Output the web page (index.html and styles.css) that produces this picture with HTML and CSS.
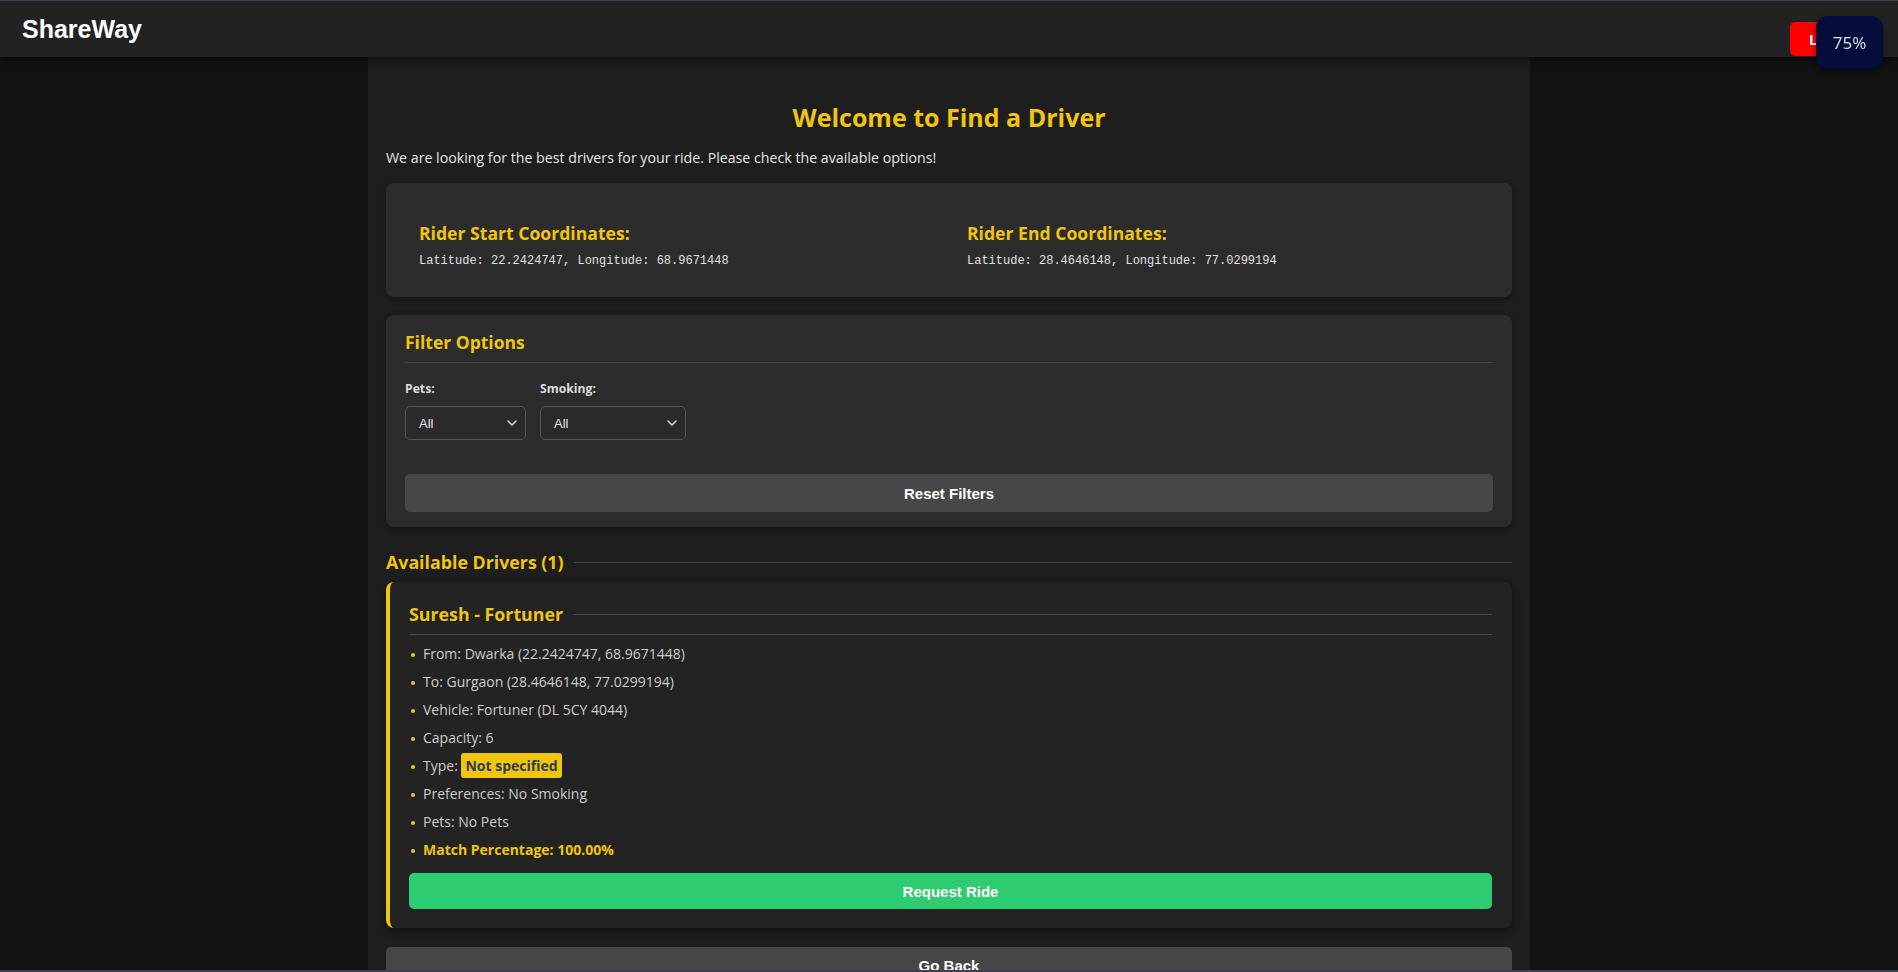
FILE: index.html
```html
<!DOCTYPE html>
<html lang="en">
<head>
<meta charset="utf-8">
<title>ShareWay - Find a Driver</title>
<link rel="stylesheet" href="styles.css">
</head>
<body>
<div class="frame"></div>
<nav class="navbar">
  <div class="brand">ShareWay</div>
  <button class="logout">Logout</button>
</nav>
<div class="zoom-badge">75%</div>
<main class="container">
  <h1 class="page-title">Welcome to Find a Driver</h1>
  <p class="intro">We are looking for the best drivers for your ride. Please check the available options!</p>

  <section class="card coords">
    <div class="coord">
      <h3 class="coord-title">Rider Start Coordinates:</h3>
      <p class="mono">Latitude: 22.2424747, Longitude: 68.9671448</p>
    </div>
    <div class="coord">
      <h3 class="coord-title">Rider End Coordinates:</h3>
      <p class="mono">Latitude: 28.4646148, Longitude: 77.0299194</p>
    </div>
  </section>

  <section class="card filters">
    <h3 class="filter-title">Filter Options</h3>
    <div class="filter-row">
      <div class="filter-group">
        <label class="filter-label">Pets:</label>
        <div class="select select-pets"><span>All</span><svg class="chev" width="10" height="6" viewBox="0 0 10 6"><path d="M1 1l4 4 4-4" fill="none" stroke="#d0d0d0" stroke-width="1.6" stroke-linecap="round" stroke-linejoin="round"/></svg></div>
      </div>
      <div class="filter-group">
        <label class="filter-label">Smoking:</label>
        <div class="select select-smoking"><span>All</span><svg class="chev" width="10" height="6" viewBox="0 0 10 6"><path d="M1 1l4 4 4-4" fill="none" stroke="#d0d0d0" stroke-width="1.6" stroke-linecap="round" stroke-linejoin="round"/></svg></div>
      </div>
    </div>
    <button class="btn btn-grey">Reset Filters</button>
  </section>

  <h2 class="section-title">Available Drivers (1)</h2>

  <article class="driver-card">
    <h3 class="driver-name">Suresh - Fortuner</h3>
    <ul class="details">
      <li>From: Dwarka (22.2424747, 68.9671448)</li>
      <li>To: Gurgaon (28.4646148, 77.0299194)</li>
      <li>Vehicle: Fortuner (DL 5CY 4044)</li>
      <li>Capacity: 6</li>
      <li>Type: <span class="badge">Not specified</span></li>
      <li>Preferences: No Smoking</li>
      <li>Pets: No Pets</li>
      <li class="match">Match Percentage: 100.00%</li>
    </ul>
    <button class="btn btn-green">Request Ride</button>
  </article>

  <button class="btn btn-grey btn-back">Go Back</button>
</main>
</body>
</html>
```

FILE: styles.css
```css
* { box-sizing: border-box; }
html, body { margin: 0; padding: 0; }
body {
  background: #121212;
  color: #e0e0e0;
  font-family: "Open Sans", "Noto Sans", sans-serif;
  height: 972px;
  overflow: hidden;
}
.frame {
  position: fixed;
  inset: 0;
  border-top: 1px solid #3e3e55;
  border-bottom: 2px solid #3e3e55;
  pointer-events: none;
  z-index: 20;
}
.navbar {
  position: relative;
  z-index: 2;
  height: 57px;
  background: #222222;
  display: flex;
  justify-content: space-between;
  align-items: flex-start;
  padding: 0 21px 0 22px;
  box-shadow: 0 3px 8px rgba(0, 0, 0, 0.55);
}
.brand {
  font-family: "Liberation Sans", Arial, sans-serif;
  font-weight: 700;
  font-size: 25px;
  line-height: 28px;
  margin-top: 15px;
  color: #ffffff;
}
.logout {
  margin-top: 22px;
  height: 34px;
  padding: 0 17px 0 19px;
  border: 0;
  border-radius: 5px;
  background: #ff0000;
  color: #ffffff;
  font: 700 15px "Liberation Sans", Arial, sans-serif;
}
.zoom-badge {
  position: absolute;
  top: 16px;
  right: 15px;
  width: 67px;
  height: 53px;
  border-radius: 12px;
  background: #030c3a;
  color: #dfe3f0;
  font: 400 17px "Open Sans", sans-serif;
  display: flex;
  align-items: center;
  justify-content: center;
  z-index: 30;
  box-shadow: 0 2px 6px rgba(0, 0, 0, 0.4);
}
.container {
  width: 1162px;
  margin: 0 auto;
  background: #1e1e1e;
  padding: 20px 18px 0;
  min-height: 915px;
}
.page-title {
  margin: 24px 0 15px;
  font-size: 25px;
  line-height: 32px;
  font-weight: 700;
  text-align: center;
  color: #f1c40f;
}
.intro {
  margin: 0 0 15px;
  font-size: 14.2px;
  line-height: 20px;
  color: #e6e6e6;
}
.card {
  background: #2c2c2c;
  border-radius: 8px;
  box-shadow: 0 2px 6px rgba(0, 0, 0, 0.35);
}
.coords {
  display: grid;
  grid-template-columns: 1fr 1fr;
  column-gap: 36px;
  padding: 38px 33px 28px;
  margin-bottom: 18px;
}
.coord-title {
  margin: 0 0 8px;
  font-size: 17.6px;
  line-height: 24px;
  font-weight: 700;
  color: #f1c40f;
}
.mono {
  margin: 0;
  font-family: "Liberation Mono", "DejaVu Sans Mono", monospace;
  font-size: 12px;
  line-height: 16px;
  color: #e0e0e0;
}
.filters {
  padding: 15px 19px;
}
.filter-title {
  margin: 0 0 18px;
  padding-bottom: 8px;
  border-bottom: 1px solid #444;
  font-size: 17.5px;
  line-height: 24px;
  font-weight: 700;
  color: #f1c40f;
}
.filter-row {
  display: flex;
  gap: 14px;
  margin-bottom: 34px;
}
.filter-label {
  display: block;
  margin-bottom: 9px;
  font-size: 12.2px;
  line-height: 16px;
  font-weight: 700;
  color: #dddddd;
}
.select {
  height: 34px;
  display: flex;
  align-items: center;
  justify-content: space-between;
  padding: 0 8px 0 13px;
  border: 1px solid #555;
  border-radius: 5px;
  background: #2a2a2a;
  color: #e6e6e6;
  font: 400 13px "Liberation Sans", Arial, sans-serif;
}
.select-pets { width: 121px; }
.select-smoking { width: 146px; }
.btn {
  display: block;
  width: 100%;
  border: 0;
  border-radius: 5px;
  color: #ffffff;
  font: 700 15px "Liberation Sans", Arial, sans-serif;
}
.btn-grey {
  height: 38px;
  background: #474747;
}
.btn-green {
  height: 36px;
  background: #2ecc71;
}
.section-title {
  display: flex;
  align-items: center;
  margin: 23px 0 8px;
  font-size: 17.8px;
  line-height: 24px;
  font-weight: 700;
  color: #f1c40f;
}
.section-title::after,
.driver-name::after {
  content: "";
  flex: 1;
  height: 1px;
  background: #444;
  margin-left: 10px;
}
.driver-card {
  background: #232323;
  border-left: 4px solid #f1c40f;
  border-radius: 8px;
  padding: 20px 20px 19px 19px;
  box-shadow: 0 3px 8px rgba(0, 0, 0, 0.45);
}
.driver-name {
  display: flex;
  align-items: center;
  margin: 0;
  padding-bottom: 8px;
  border-bottom: 1px solid #444;
  font-size: 17.8px;
  line-height: 24px;
  font-weight: 700;
  color: #f1c40f;
}
.details {
  list-style: none;
  margin: 5px 0 9px;
  padding: 0;
}
.details li {
  position: relative;
  padding: 4px 0 4px 14px;
  font-size: 14px;
  line-height: 20px;
  color: #cccccc;
}
.details li::before {
  content: "";
  position: absolute;
  left: 2px;
  top: 13px;
  width: 4px;
  height: 4px;
  border-radius: 50%;
  background: #f1c40f;
}
.details .match {
  font-weight: 700;
  color: #f1c40f;
}
.badge {
  background: #f1c40f;
  color: #2c3e50;
  font-weight: 700;
  font-size: 14px;
  padding: 3px 4px;
  border-radius: 3px;
}
.btn-back {
  margin-top: 19px;
}
.btn-back {
  padding-bottom: 2px;
}
```
